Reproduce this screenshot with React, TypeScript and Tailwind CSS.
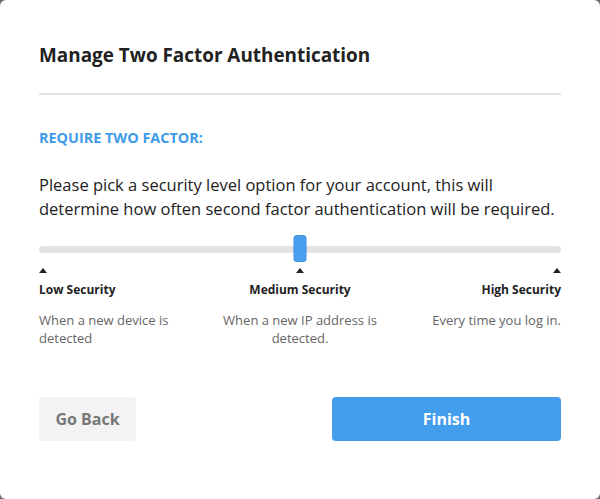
import React, { useState } from "react";

type Level = {
    label: string;
    description: string;
    align: "left" | "center" | "right";
};

const levels: Level[] = [
    { label: "Low Security", description: "When a new device is detected", align: "left" },
    { label: "Medium Security", description: "When a new IP address is detected.", align: "center" },
    { label: "High Security", description: "Every time you log in.", align: "right" },
];

function Caret() {
    return (
        <svg width="8" height="5" viewBox="0 0 8 5" className="block">
            <path d="M0 5 L4 0 L8 5 Z" fill="#222" />
        </svg>
    );
}

export default function App() {
    const [level, setLevel] = useState(1);

    return (
        <div className="w-[600px] h-[499px] bg-[#6b6b6b]" style={{ fontFamily: '"Open Sans", sans-serif' }}>
            <div className="w-full h-full bg-white rounded-[6px] px-[39px] pt-[40px] flex flex-col">
                {/* Header */}
                <h1 className="text-[18.9px] leading-[30px] font-bold text-[#222]">
                    Manage Two Factor Authentication
                </h1>
                <div className="mt-[23px] h-[2px] bg-[#e3e3e3]" />

                {/* Section */}
                <h2 className="mt-[33px] text-[14.4px] leading-[20px] font-bold text-[#3d9be9]">
                    REQUIRE TWO FACTOR:
                </h2>
                <p className="mt-[25px] text-[16.5px] leading-[24px] text-[#222]">
                    Please pick a security level option for your account, this will determine how often second factor authentication will be required.
                </p>

                {/* Slider */}
                <div className="relative mt-[14px] h-[28px] flex items-center">
                    <div className="w-full h-[7px] rounded-full bg-[#e3e3e3]" />
                    <button
                        onClick={() => setLevel((level + 1) % 3)}
                        className="absolute top-0 w-[13px] h-[27px] rounded-[3px] bg-[#4aa0ef] border border-[#3b8fe0] -translate-x-1/2"
                        style={{ left: `${level * 50}%` }}
                    />
                </div>

                {/* Levels */}
                <div className="mt-[5px] grid grid-cols-3">
                    {levels.map((l) => (
                        <div
                            key={l.label}
                            className={
                                l.align === "left"
                                    ? "flex flex-col items-start text-left"
                                    : l.align === "center"
                                    ? "flex flex-col items-center text-center"
                                    : "flex flex-col items-end text-right"
                            }
                        >
                            <Caret />
                            <div className="mt-[8px] text-[12px] leading-[18px] font-bold text-[#222]">{l.label}</div>
                            <div className="mt-[12px] text-[13px] leading-[18px] text-[#666] max-w-[162px]">
                                {l.description}
                            </div>
                        </div>
                    ))}
                </div>

                {/* Actions */}
                <div className="mt-[50px] flex justify-between">
                    <button className="w-[97px] h-[44px] rounded-[4px] bg-[#f3f3f3] text-[16px] font-bold text-[#777]">
                        Go Back
                    </button>
                    <button className="w-[229px] h-[44px] rounded-[4px] bg-[#429ded] text-[16px] font-bold text-white">
                        Finish
                    </button>
                </div>
            </div>
        </div>
    );
}
